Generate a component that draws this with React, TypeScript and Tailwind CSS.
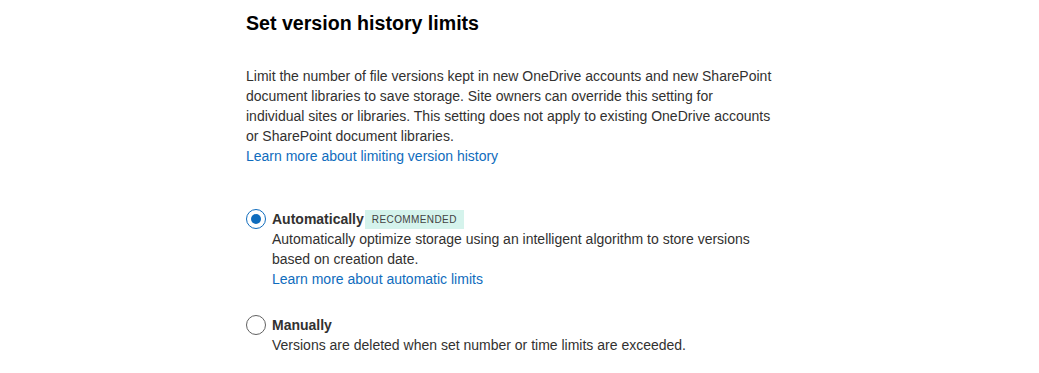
import React, { useState } from "react";

const options = [
  {
    id: "auto",
    label: "Automatically",
    badge: "Recommended",
    desc: "Automatically optimize storage using an intelligent algorithm to store versions based on creation date.",
    link: "Learn more about automatic limits",
  },
  {
    id: "manual",
    label: "Manually",
    desc: "Versions are deleted when set number or time limits are exceeded.",
  },
];

export default function App() {
  const [selected, setSelected] = useState("auto");

  return (
    <div className="min-h-[373px] bg-white text-[#323130] font-['Segoe_UI','Liberation_Sans',sans-serif] text-[14px]">
      <div className="ml-[246px] w-[560px] pt-[9px]">
        <h1 className="text-[19.6px] leading-[28px] font-bold text-black">Set version history limits</h1>

        <p className="mt-[29px] leading-[20px]">
          Limit the number of file versions kept in new OneDrive accounts and new SharePoint
          <br />
          document libraries to save storage. Site owners can override this setting for
          <br />
          individual sites or libraries. This setting does not apply to existing OneDrive accounts
          <br />
          or SharePoint document libraries.
        </p>
        <a href="#" className="block leading-[20px] text-[#0f6cbd] hover:underline">
          Learn more about limiting version history
        </a>

        <div className="mt-[43px] flex flex-col gap-[26px]">
          {options.map((o) => {
            const on = selected === o.id;
            return (
              <label key={o.id} className="flex gap-[6px] cursor-pointer" onClick={() => setSelected(o.id)}>
                <span
                  className={`w-[20px] h-[20px] shrink-0 rounded-full border flex items-center justify-center ${
                    on ? "border-[#0f6cbd]" : "border-[#616161]"
                  }`}
                >
                  {on && <span className="w-[10px] h-[10px] rounded-full bg-[#0f6cbd]" />}
                </span>
                <span className="flex flex-col">
                  <span className="flex items-center h-[20px]">
                    <span className="font-semibold leading-[20px]">{o.label}</span>
                    {o.badge && (
                      <span className="ml-[1px] h-[19px] px-[7px] flex items-center bg-[#d5f3ec] text-[#424242] text-[10px] uppercase tracking-[0.04em] font-medium">
                        {o.badge}
                      </span>
                    )}
                  </span>
                  <span className="leading-[20px] max-w-[505px]">{o.desc}</span>
                  {o.link && (
                    <a href="#" className="leading-[20px] text-[#0f6cbd] hover:underline">
                      {o.link}
                    </a>
                  )}
                </span>
              </label>
            );
          })}
        </div>
      </div>
    </div>
  );
}
